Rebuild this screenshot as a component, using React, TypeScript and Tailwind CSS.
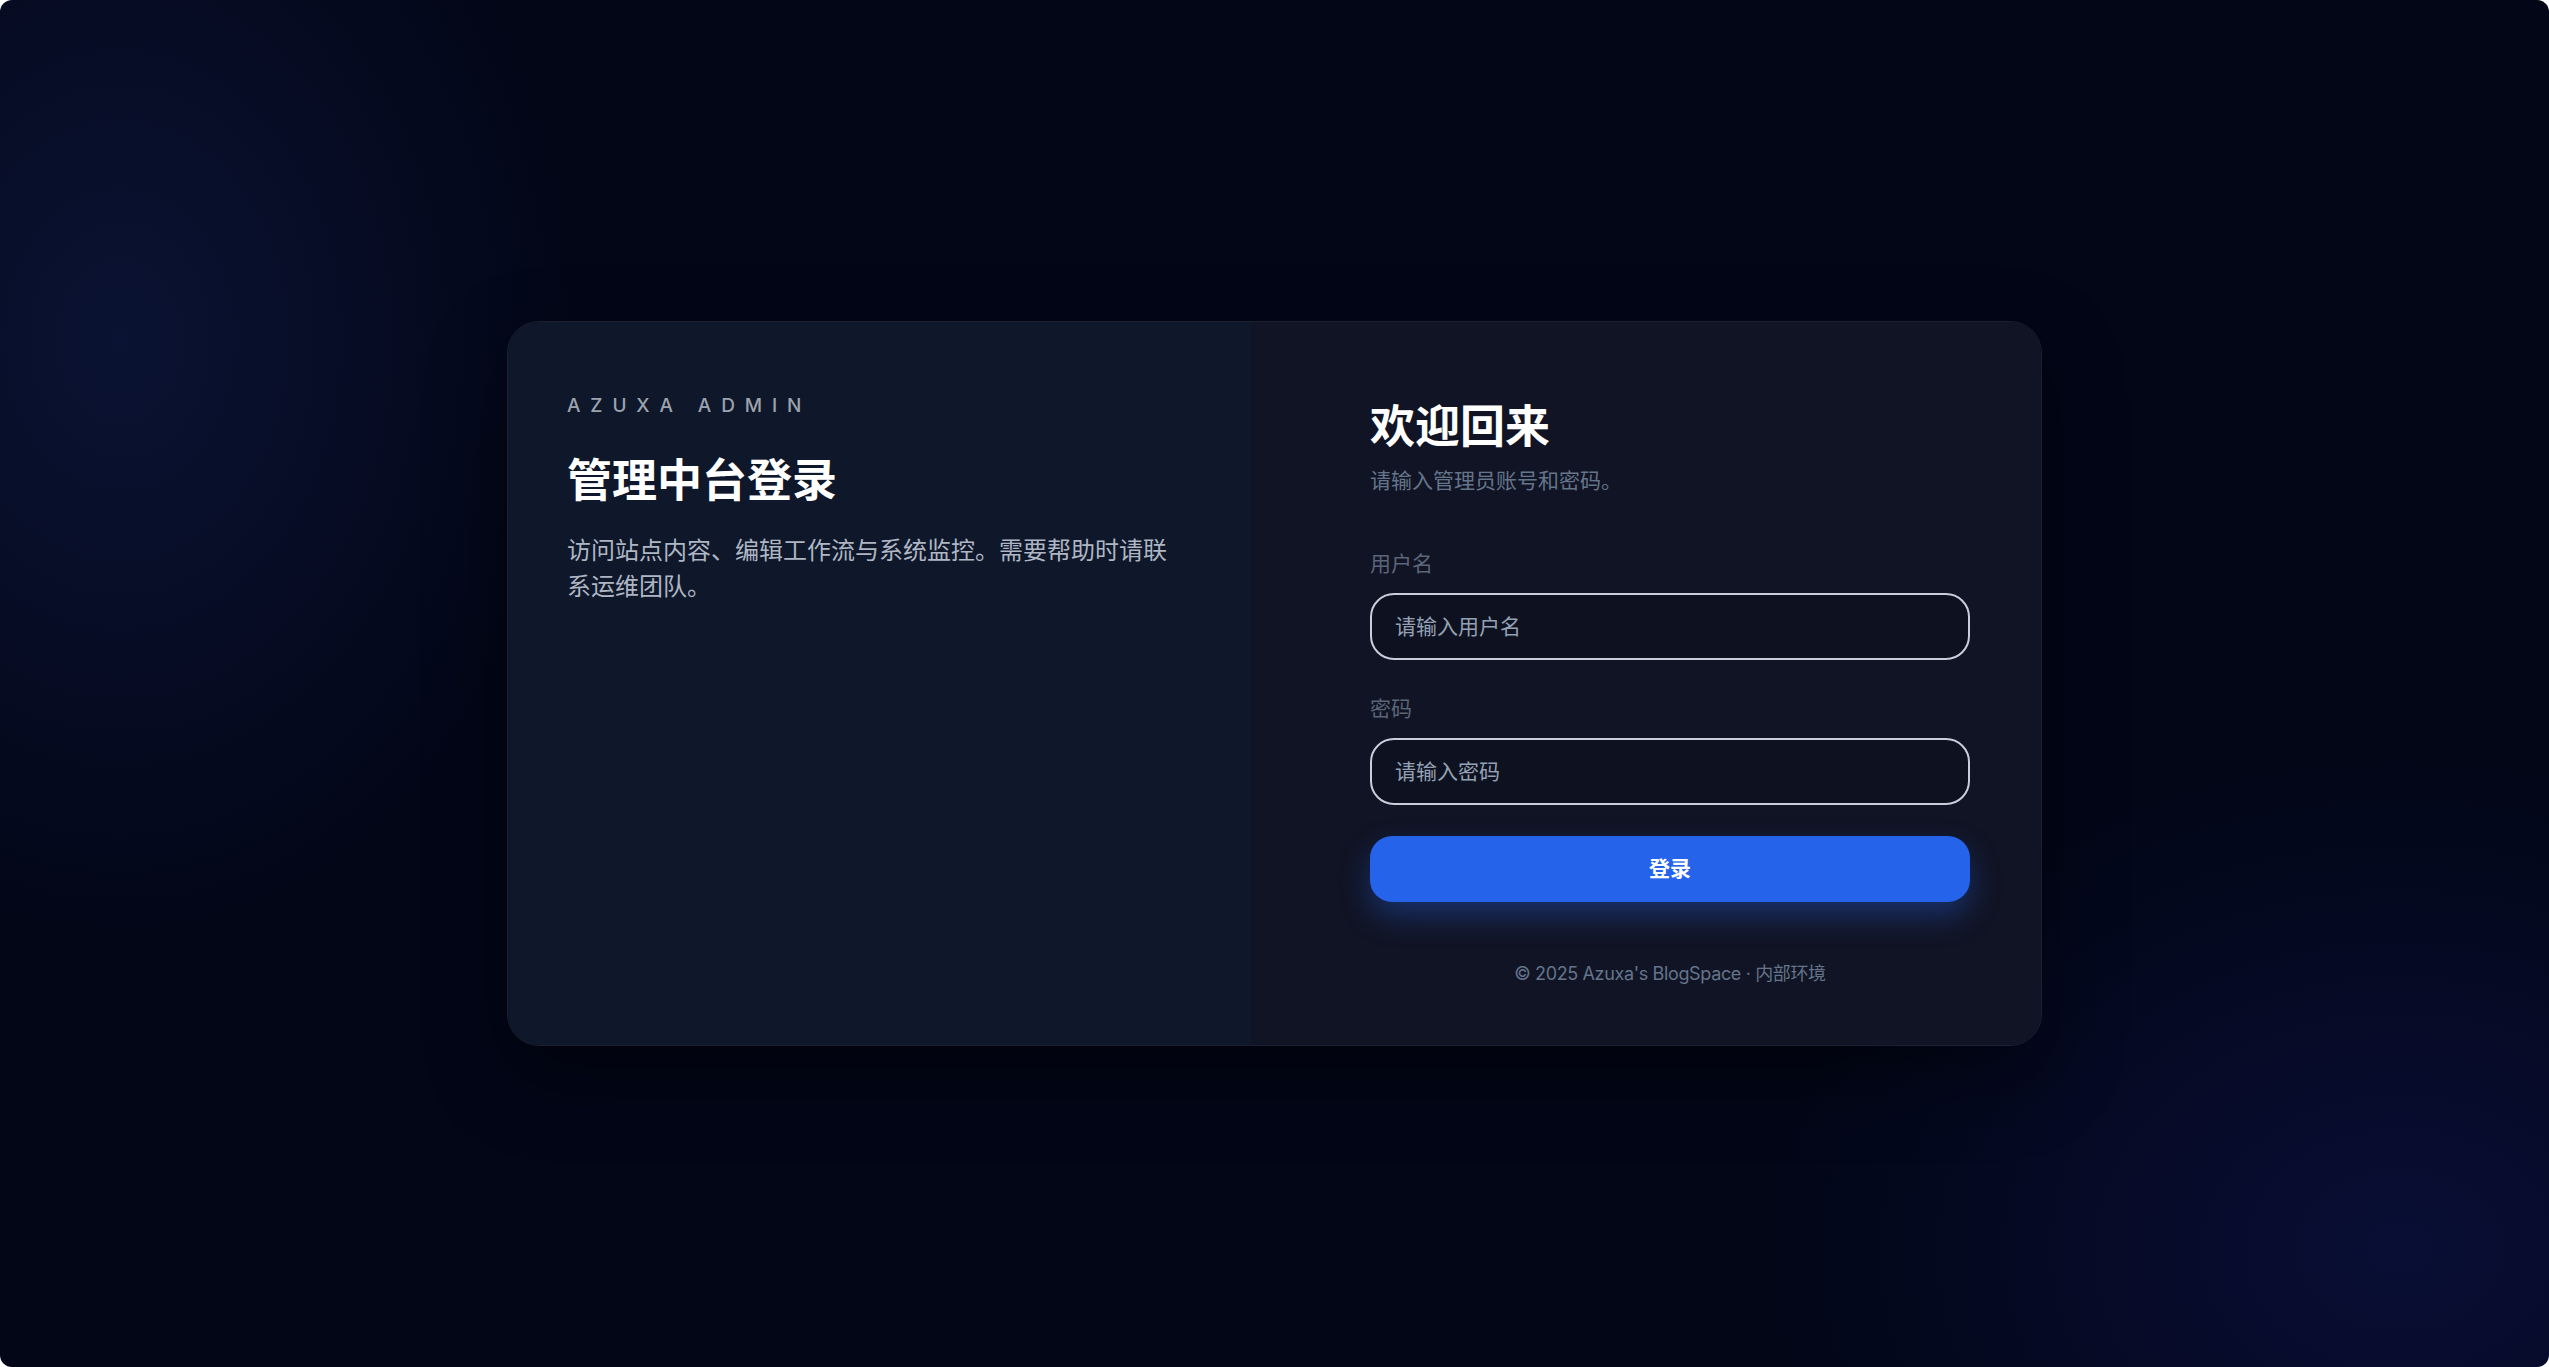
import { useState } from 'react';

const font = { fontFamily: 'Inter, "Noto Sans CJK SC", "Noto Sans", sans-serif' };

export default function App() {
  const [username, setUsername] = useState('');
  const [password, setPassword] = useState('');

  return (
    <div className="h-screen w-full bg-white" style={font}>
      <div className="flex h-full w-full items-center justify-center overflow-hidden rounded-[12px] bg-[#020617] bg-[radial-gradient(ellipse_650px_850px_at_120px_340px,rgba(23,37,90,0.42),transparent_70%),radial-gradient(ellipse_900px_700px_at_2400px_1250px,rgba(18,24,90,0.45),transparent_70%)]">
        <div className="flex h-[725px] w-[1535px] overflow-hidden rounded-[32px] border border-white/10 shadow-[0_30px_80px_rgba(0,0,0,0.45)]">
          {/* brand side */}
          <div className="w-[743px] shrink-0 bg-[#0f172a] pt-[70px] pr-[60px] pl-[59px]">
            <p className="text-[19px] leading-[28px] font-medium tracking-[0.52em] text-[#9ca3af]">AZUXA ADMIN</p>
            <h1 className="mt-[33px] text-[45px] leading-[56px] font-bold text-white">管理中台登录</h1>
            <p className="mt-[24px] max-w-[610px] text-[24px] leading-[36px] text-[#aeb6c4]">
              访问站点内容、编辑工作流与系统监控。需要帮助时请联系运维团队。
            </p>
          </div>

          {/* form side */}
          <div className="flex-1 bg-[#111424] pt-[77px] pr-[72px] pl-[119px]">
            <h2 className="text-[45px] leading-[56px] font-bold text-white">欢迎回来</h2>
            <p className="mt-[10px] text-[21px] leading-[32px] text-[#64748b]">请输入管理员账号和密码。</p>

            <form className="flex flex-col" onSubmit={(e) => e.preventDefault()}>
              <label className="mt-[51px] text-[21px] leading-[32px] text-[#5b6578]">用户名</label>
              <input
                value={username}
                onChange={(e) => setUsername(e.target.value)}
                placeholder="请输入用户名"
                className="mt-[13px] h-[67px] w-[600px] rounded-[24px] border-2 border-[#c9cfda] bg-[#0e1220] px-[23px] text-[21px] text-white outline-none placeholder:text-[#94a0b4]"
              />

              <label className="mt-[33px] text-[21px] leading-[32px] text-[#5b6578]">密码</label>
              <input
                type="password"
                value={password}
                onChange={(e) => setPassword(e.target.value)}
                placeholder="请输入密码"
                className="mt-[13px] h-[67px] w-[600px] rounded-[24px] border-2 border-[#c9cfda] bg-[#0e1220] px-[23px] text-[21px] text-white outline-none placeholder:text-[#94a0b4]"
              />

              <button
                type="submit"
                className="mt-[31px] h-[66px] w-[600px] rounded-[22px] bg-[#2563eb] text-[21px] font-bold text-white shadow-[0_14px_30px_rgba(37,99,235,0.35)]"
              >
                登录
              </button>
            </form>

            <p className="mt-[58px] w-[600px] text-center text-[18px] leading-[28px] tracking-[-0.02em] text-[#64748b]">
              © 2025 Azuxa's BlogSpace · 内部环境
            </p>
          </div>
        </div>
      </div>
    </div>
  );
}
